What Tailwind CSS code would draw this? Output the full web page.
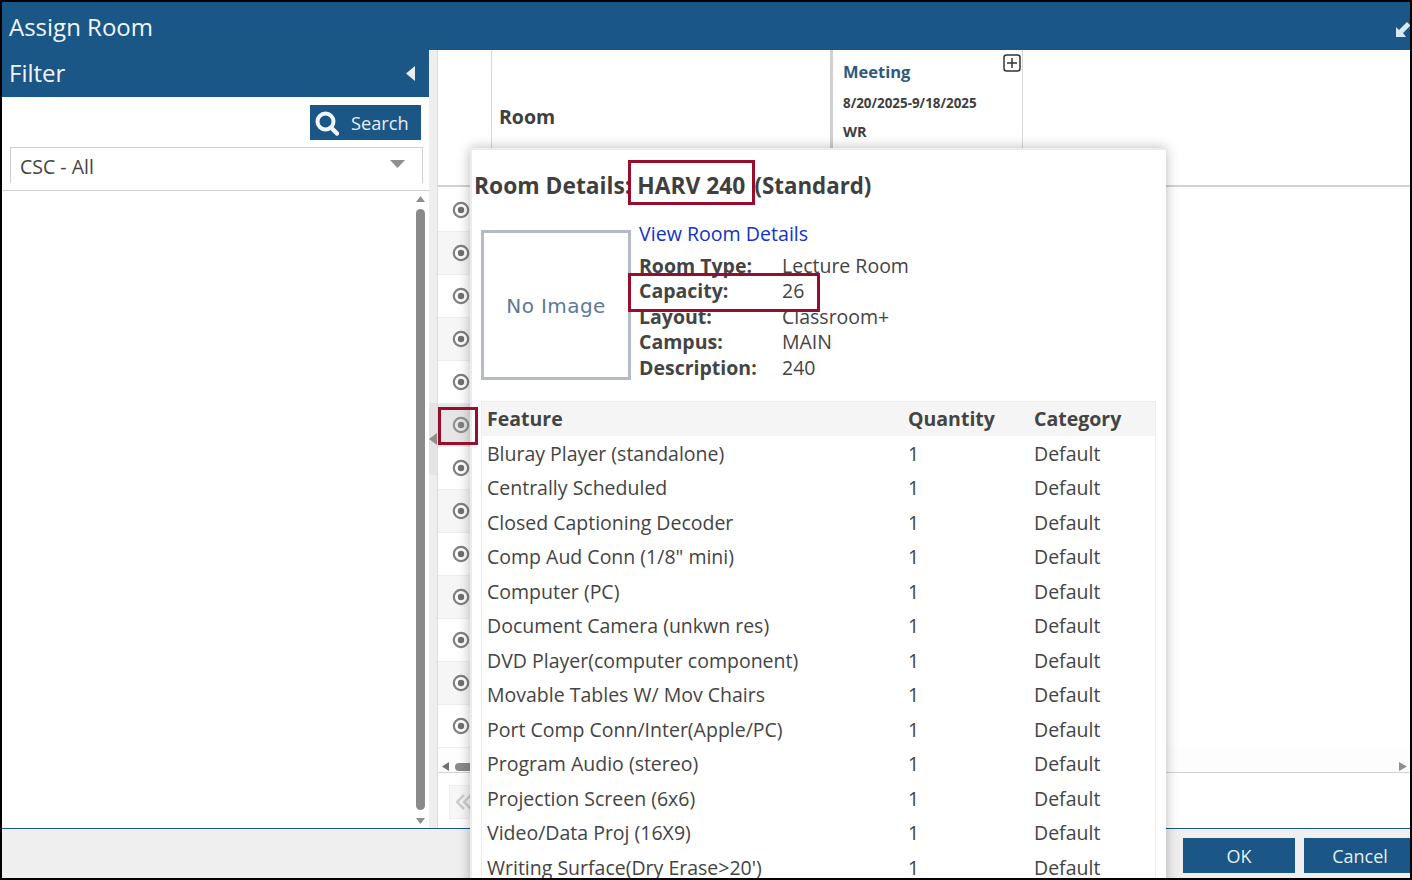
<!DOCTYPE html>
<html>
<head>
<meta charset="utf-8">
<script src="https://cdn.jsdelivr.net/npm/@tailwindcss/browser@4"></script>
</head>
<body class="m-0 bg-white">
<div class="relative w-[1412px] h-[880px] overflow-hidden border-2 border-black bg-white flex flex-col font-['Open_Sans',sans-serif] text-[#3f3f3f]">
  <!-- title bar -->
  <div class="h-[48px] shrink-0 bg-[#1a5686] flex items-center justify-between pl-[7px] text-white">
    <span class="text-[24px] leading-[48px] pt-[1px] text-[#f2f6fa]">Assign Room</span>
    <svg class="mt-[6px]" width="14" height="18" viewBox="0 0 14 18"><path d="M0 17 L0 7 L3 10 L11 2 L14 5 L14 6 L7 13 L10 17 Z" fill="#d8e8f4"/></svg>
  </div>
  <div class="flex flex-1 min-h-0">
    <!-- left filter -->
    <div class="w-[427px] shrink-0 flex flex-col bg-white">
      <div class="h-[47px] shrink-0 bg-[#1a5686] flex items-center justify-between pl-[7px] pr-[14px]">
        <span class="text-[24px] text-[#f2f6fa] mb-[2px]">Filter</span>
        <svg width="9" height="15" viewBox="0 0 9 15"><path d="M9 0 V15 L0 7.5 Z" fill="#e8eef4"/></svg>
      </div>
      <div class="flex justify-end pt-[8px] pr-[8px]">
        <div class="w-[111px] h-[35px] bg-[#1a5686] flex items-center pl-[5px] gap-[12px] text-white">
          <svg width="24" height="26" viewBox="0 0 24 26"><circle cx="10.5" cy="11.5" r="8" fill="none" stroke="#f2f6fa" stroke-width="4"/><path d="M16 17.5 L22 23.5" stroke="#f2f6fa" stroke-width="4.5" stroke-linecap="round"/></svg>
          <span class="text-[18.2px] text-[#e8eef4] pt-[2px]">Search</span>
        </div>
      </div>
      <div class="mt-[7px] ml-[8px] mr-[6px] h-[36px] border-t border-x border-[#cfcfcf] flex justify-between pl-[9px] pr-[17px] pt-[4px]">
        <span class="text-[19.5px] leading-[30px] text-[#444]">CSC - All</span>
        <svg class="mt-[8px]" width="15" height="8" viewBox="0 0 15 8"><path d="M0 0 H15 L7.5 8 Z" fill="#8f8f8f"/></svg>
      </div>
      <div class="border-t border-[#cfcfcf] ml-[1px] mt-[7px]"></div>
      <div class="flex-1 flex justify-end pr-[4px] pt-[5px]">
        <div class="w-[9px] flex flex-col items-center">
          <svg width="9" height="6" viewBox="0 0 9 6"><path d="M0 6 L4.5 0 L9 6 Z" fill="#8f8f8f"/></svg>
          <div class="w-[9px] h-[601px] mt-[7px] rounded-full bg-[#8a8a8a]"></div>
          <svg class="mt-[8px]" width="9" height="6" viewBox="0 0 9 6"><path d="M0 0 H9 L4.5 6 Z" fill="#8f8f8f"/></svg>
        </div>
      </div>
    </div>
    <!-- gutter -->
    <div class="w-[9px] shrink-0 bg-[#eeeeee] border-r border-[#dcdcdc] flex flex-col justify-center">
      <div class="h-[72px] bg-[#e4e4e4] flex items-center">
        <svg width="8" height="12" viewBox="0 0 8 12"><path d="M8 0 V12 L0 6 Z" fill="#8f8f88"/></svg>
      </div>
    </div>
    <!-- grid -->
    <div class="flex-1 min-w-0 flex flex-col">
      <div class="h-[137px] shrink-0 flex border-b-[2px] border-[#d2d2d2]">
        <div class="w-[54px] shrink-0 border-r border-[#d8d8d8]"></div>
        <div class="w-[338px] shrink-0 pl-[7px] pt-[52px] text-[19.5px] font-bold text-[#3f3f3f]">Room</div>
        <div class="w-[193px] shrink-0 border-l-[3px] border-r border-l-[#d0d0d0] border-r-[#d8d8d8] pl-[10px] relative">
          <div class="text-[16.5px] font-bold text-[#2d5a7e] leading-[24px] pt-[10px]">Meeting</div>
          <div class="text-[13.4px] font-bold leading-[18px] pt-[10px] text-[#3f3f3f]">8/20/2025-9/18/2025</div>
          <div class="text-[14.5px] font-bold leading-[20px] pt-[10px] text-[#3f3f3f]">WR</div>
          <svg class="absolute right-[1px] top-[4px]" width="18" height="18" viewBox="0 0 18 18"><rect x="1" y="1" width="16" height="16" rx="2.5" fill="#fff" stroke="#333" stroke-width="1.5"/><path d="M9 4 V14 M4 9 H14" stroke="#333" stroke-width="1.5"/></svg>
        </div>
      </div>
      <div class="flex flex-col w-[40px] mt-[2px]">
        <div class="h-[43px] border-b border-[#eeeeee] flex items-center pl-[14px]"><svg width="18" height="18" viewBox="0 0 18 18"><circle cx="9" cy="9" r="7.2" fill="#fff" stroke="#808080" stroke-width="2.2"/><circle cx="9" cy="9" r="3.2" fill="#707070"/></svg></div>
        <div class="h-[43px] border-b border-[#eeeeee] bg-[#f6f6f6] flex items-center pl-[14px]"><svg width="18" height="18" viewBox="0 0 18 18"><circle cx="9" cy="9" r="7.2" fill="#fff" stroke="#808080" stroke-width="2.2"/><circle cx="9" cy="9" r="3.2" fill="#707070"/></svg></div>
        <div class="h-[43px] border-b border-[#eeeeee] flex items-center pl-[14px]"><svg width="18" height="18" viewBox="0 0 18 18"><circle cx="9" cy="9" r="7.2" fill="#fff" stroke="#808080" stroke-width="2.2"/><circle cx="9" cy="9" r="3.2" fill="#707070"/></svg></div>
        <div class="h-[43px] border-b border-[#eeeeee] bg-[#f6f6f6] flex items-center pl-[14px]"><svg width="18" height="18" viewBox="0 0 18 18"><circle cx="9" cy="9" r="7.2" fill="#fff" stroke="#808080" stroke-width="2.2"/><circle cx="9" cy="9" r="3.2" fill="#707070"/></svg></div>
        <div class="h-[43px] border-b border-[#eeeeee] flex items-center pl-[14px]"><svg width="18" height="18" viewBox="0 0 18 18"><circle cx="9" cy="9" r="7.2" fill="#fff" stroke="#808080" stroke-width="2.2"/><circle cx="9" cy="9" r="3.2" fill="#707070"/></svg></div>
        <div class="h-[43px] border-b border-[#eeeeee] bg-[#e6e6e6] flex items-center pl-[14px]"><svg width="18" height="18" viewBox="0 0 18 18"><circle cx="9" cy="9" r="7.2" fill="#e6e6e6" stroke="#909090" stroke-width="2.2"/><circle cx="9" cy="9" r="3.2" fill="#808080"/></svg></div>
        <div class="h-[43px] border-b border-[#eeeeee] flex items-center pl-[14px]"><svg width="18" height="18" viewBox="0 0 18 18"><circle cx="9" cy="9" r="7.2" fill="#fff" stroke="#808080" stroke-width="2.2"/><circle cx="9" cy="9" r="3.2" fill="#707070"/></svg></div>
        <div class="h-[43px] border-b border-[#eeeeee] bg-[#f6f6f6] flex items-center pl-[14px]"><svg width="18" height="18" viewBox="0 0 18 18"><circle cx="9" cy="9" r="7.2" fill="#fff" stroke="#808080" stroke-width="2.2"/><circle cx="9" cy="9" r="3.2" fill="#707070"/></svg></div>
        <div class="h-[43px] border-b border-[#eeeeee] flex items-center pl-[14px]"><svg width="18" height="18" viewBox="0 0 18 18"><circle cx="9" cy="9" r="7.2" fill="#fff" stroke="#808080" stroke-width="2.2"/><circle cx="9" cy="9" r="3.2" fill="#707070"/></svg></div>
        <div class="h-[43px] border-b border-[#eeeeee] bg-[#f6f6f6] flex items-center pl-[14px]"><svg width="18" height="18" viewBox="0 0 18 18"><circle cx="9" cy="9" r="7.2" fill="#fff" stroke="#808080" stroke-width="2.2"/><circle cx="9" cy="9" r="3.2" fill="#707070"/></svg></div>
        <div class="h-[43px] border-b border-[#eeeeee] flex items-center pl-[14px]"><svg width="18" height="18" viewBox="0 0 18 18"><circle cx="9" cy="9" r="7.2" fill="#fff" stroke="#808080" stroke-width="2.2"/><circle cx="9" cy="9" r="3.2" fill="#707070"/></svg></div>
        <div class="h-[43px] border-b border-[#eeeeee] bg-[#f6f6f6] flex items-center pl-[14px]"><svg width="18" height="18" viewBox="0 0 18 18"><circle cx="9" cy="9" r="7.2" fill="#fff" stroke="#808080" stroke-width="2.2"/><circle cx="9" cy="9" r="3.2" fill="#707070"/></svg></div>
        <div class="h-[43px] border-b border-[#eeeeee] flex items-center pl-[14px]"><svg width="18" height="18" viewBox="0 0 18 18"><circle cx="9" cy="9" r="7.2" fill="#fff" stroke="#808080" stroke-width="2.2"/><circle cx="9" cy="9" r="3.2" fill="#707070"/></svg></div>
      </div>
      <!-- h scrollbar -->
      <div class="h-[25px] shrink-0 border-b border-[#d2d2d2] bg-[#fdfdfd] flex items-center justify-between pl-[4px] pr-[3px] pt-[13px]">
        <div class="flex items-center gap-[6px]">
          <svg width="7" height="9" viewBox="0 0 7 9"><path d="M7 0 V9 L0 4.5 Z" fill="#707070"/></svg>
          <div class="w-[60px] h-[8px] rounded-full bg-[#8a8a8a]"></div>
        </div>
        <svg width="8" height="9" viewBox="0 0 8 9"><path d="M0 0 V9 L8 4.5 Z" fill="#8f8f8f"/></svg>
      </div>
      <div class="pl-[11px] pt-[12px]">
        <div class="w-[30px] h-[34px] bg-[#f7f7f7] border border-[#efefef] flex items-center pl-[6px]">
          <svg width="16" height="16" viewBox="0 0 16 16"><path d="M8 1 L1 8 L8 15 M15 1 L8 8 L15 15" fill="none" stroke="#cfcfcf" stroke-width="2.5"/></svg>
        </div>
      </div>
    </div>
  </div>
  <!-- footer -->
  <div class="h-[50px] shrink-0 bg-[#efefef] border-t border-[#1a5686] flex justify-end items-start pt-[9px] gap-[9px]">
    <div class="w-[112px] h-[35px] bg-[#1a5686] text-[#e8eef4] text-[18px] flex items-center justify-center pt-[2px]">OK</div>
    <div class="w-[106px] h-[35px] bg-[#1a5686] text-[#e8eef4] text-[18px] flex items-center justify-center pl-[6px] pt-[2px]">Cancel</div>
  </div>

  <!-- popup -->
  <div class="absolute left-[468px] top-[146px] w-[696px] h-[740px] bg-white border-t-[2px] border-l-[2px] border-[#ececec] shadow-[0_0_12px_rgba(0,0,0,0.28)] pl-[2px]">
    <div class="text-[22.8px] font-bold leading-[32px] mt-[20px] whitespace-nowrap text-[#3f3f3f]">Room Details:<span class="ml-[6px]">HARV 240</span><span class="ml-[9px] text-[22.3px]">(Standard)</span></div>
    <div class="flex mt-[18px] ml-[7px]">
      <div class="w-[150px] h-[150px] mt-[10px] border-[3px] border-[#b3bcc6] flex items-center justify-center font-['DejaVu_Sans',sans-serif] text-[20px] tracking-[0.4px] text-[#5c7a94] pt-[1px]">No Image</div>
      <div class="pl-[8px]">
        <div class="text-[19.6px] leading-[27px] text-[#1432c8]">View Room Details</div>
        <div class="grid grid-cols-[143px_auto] text-[19.5px] leading-[25.5px] mt-[5.75px] text-[#444]">
          <span class="font-bold">Room Type:</span><span>Lecture Room</span>
          <span class="font-bold">Capacity:</span><span>26</span>
          <span class="font-bold">Layout:</span><span>Classroom+</span>
          <span class="font-bold">Campus:</span><span>MAIN</span>
          <span class="font-bold">Description:</span><span>240</span>
        </div>
      </div>
    </div>
    <div class="ml-[7px] mt-[20.5px] w-[675px] border-l border-r border-t border-[#ececec] text-[19.5px] text-[#444]">
      <div class="grid grid-cols-[421px_126px_auto] pl-[5px] h-[34px] leading-[34px] bg-[#f5f5f5] font-bold"><span>Feature</span><span>Quantity</span><span>Category</span></div>
      <div class="grid grid-cols-[421px_126px_auto] pl-[5px] h-[34.5px] leading-[36px]"><span>Bluray Player (standalone)</span><span>1</span><span>Default</span></div>
      <div class="grid grid-cols-[421px_126px_auto] pl-[5px] h-[34.5px] leading-[36px]"><span>Centrally Scheduled</span><span>1</span><span>Default</span></div>
      <div class="grid grid-cols-[421px_126px_auto] pl-[5px] h-[34.5px] leading-[36px]"><span>Closed Captioning Decoder</span><span>1</span><span>Default</span></div>
      <div class="grid grid-cols-[421px_126px_auto] pl-[5px] h-[34.5px] leading-[36px]"><span>Comp Aud Conn (1/8" mini)</span><span>1</span><span>Default</span></div>
      <div class="grid grid-cols-[421px_126px_auto] pl-[5px] h-[34.5px] leading-[36px]"><span>Computer (PC)</span><span>1</span><span>Default</span></div>
      <div class="grid grid-cols-[421px_126px_auto] pl-[5px] h-[34.5px] leading-[36px]"><span>Document Camera (unkwn res)</span><span>1</span><span>Default</span></div>
      <div class="grid grid-cols-[421px_126px_auto] pl-[5px] h-[34.5px] leading-[36px]"><span>DVD Player(computer component)</span><span>1</span><span>Default</span></div>
      <div class="grid grid-cols-[421px_126px_auto] pl-[5px] h-[34.5px] leading-[36px]"><span>Movable Tables W/ Mov Chairs</span><span>1</span><span>Default</span></div>
      <div class="grid grid-cols-[421px_126px_auto] pl-[5px] h-[34.5px] leading-[36px]"><span>Port Comp Conn/Inter(Apple/PC)</span><span>1</span><span>Default</span></div>
      <div class="grid grid-cols-[421px_126px_auto] pl-[5px] h-[34.5px] leading-[36px]"><span>Program Audio (stereo)</span><span>1</span><span>Default</span></div>
      <div class="grid grid-cols-[421px_126px_auto] pl-[5px] h-[34.5px] leading-[36px]"><span>Projection Screen (6x6)</span><span>1</span><span>Default</span></div>
      <div class="grid grid-cols-[421px_126px_auto] pl-[5px] h-[34.5px] leading-[36px]"><span>Video/Data Proj (16X9)</span><span>1</span><span>Default</span></div>
      <div class="grid grid-cols-[421px_126px_auto] pl-[5px] h-[34.5px] leading-[36px]"><span>Writing Surface(Dry Erase&gt;20')</span><span>1</span><span>Default</span></div>
    </div>
    <!-- callouts -->
    <div class="absolute left-[156px] top-[10px] w-[127px] h-[45px] border-[3px] border-[#960d2e]"></div>
    <div class="absolute left-[156px] top-[123px] w-[192px] h-[39px] border-[3px] border-[#960d2e]"></div>
  </div>
  <!-- selected row marker -->
  <div class="absolute left-[436px] top-[405px] w-[40px] h-[38px] border-[3px] border-[#960d2e]"></div>
</div>
</body>
</html>
